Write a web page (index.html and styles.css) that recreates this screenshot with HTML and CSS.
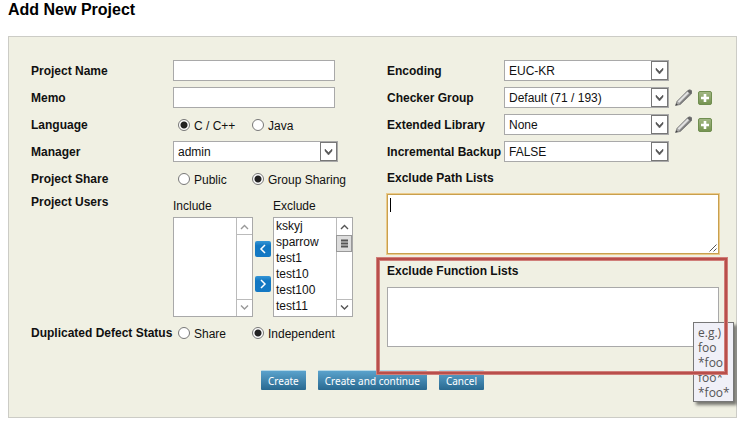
FILE: index.html
```
<!DOCTYPE html>
<html lang="en">
<head>
<meta charset="utf-8">
<title>Add New Project</title>
<link rel="stylesheet" href="styles.css">
</head>
<body>
<svg class="defs" aria-hidden="true">
  <defs>
    <linearGradient id="green" x1="0" y1="0" x2="0" y2="1"><stop offset="0" stop-color="#a3b886"/><stop offset="1" stop-color="#74924f"/></linearGradient>
    <linearGradient id="blue" x1="0" y1="0" x2="0" y2="1"><stop offset="0" stop-color="#3596d6"/><stop offset=".3" stop-color="#1277c2"/><stop offset="1" stop-color="#1479c4"/></linearGradient>
    <symbol id="drop" viewBox="0 0 17 19"><rect x=".5" y=".5" width="16" height="18" fill="#fff" stroke="#777"/><path d="M5 7v2l3.500 4 3.500-4V7l-3.500 3.500z" fill="#555" stroke="#555" stroke-width=".5"/></symbol>
    <symbol id="pencil" viewBox="0 0 16 16"><path d="M.5 15.500l1.500-4L12 1.500q2-1.500 3.500 0t-.5 3.500L5 14.500z" fill="#aaa" stroke="#777" stroke-width=".8"/><path d="M2.500 11.800l9.500-9.500 1.300 1.200L4 13z" fill="#e2e2e2"/><path d="M4.500 14l9.500-9.500" stroke="#777"/><path d="M11.500 2l3 3 1-1q.8-1.500-.3-2.500-1.500-1-2.700-.3z" fill="#666"/><path d="M.5 15.500l.8-2 1.400 1.400z" fill="#444"/></symbol>
    <symbol id="plus" viewBox="0 0 14 14"><rect x=".5" y=".5" width="13" height="13" rx="1.500" fill="url(#green)" stroke="#708e50"/><path d="M7 3v8M3 7h8" stroke="#fff" stroke-width="2.600"/></symbol>
  </defs>
</svg>
<main>
<h1>Add New Project</h1>
<form class="panel">
  <div class="columns">
    <div class="left">
      <div class="row"><label class="name" for="pname">Project Name</label><input class="text" id="pname" type="text"></div>
      <div class="row"><label class="name" for="memo">Memo</label><input class="text" id="memo" type="text"></div>
      <div class="row" role="radiogroup" aria-labelledby="lang"><span class="name" id="lang">Language</span>
        <label class="radio"><input type="radio" name="lang" checked><span>C / C++</span></label>
        <label class="radio"><input type="radio" name="lang"><span>Java</span></label></div>
      <div class="row"><label class="name" for="manager">Manager</label>
        <div class="combo"><select id="manager"><option>admin</option></select><svg class="drop"><use href="#drop"/></svg></div></div>
      <div class="row" role="radiogroup" aria-labelledby="share"><span class="name" id="share">Project Share</span>
        <label class="radio"><input type="radio" name="share"><span>Public</span></label>
        <label class="radio"><input type="radio" name="share" checked><span>Group Sharing</span></label></div>
      <div class="users">
        <span class="name">Project Users</span>
        <div class="pick">
          <label for="include">Include</label>
          <div class="listbox"><select id="include" multiple size="6"></select>
            <svg class="bar dim" viewBox="0 0 16 98"><path d="M.5 0v98M0 16.500h16M0 81.500h16" stroke="#bbb"/><path d="M5 11l3.500-3.500L12 11M5 87.500L8.500 91 12 87.500" fill="none" stroke="#999" stroke-width="1.400"/></svg></div>
        </div>
        <div class="moves">
          <button type="button" class="move" aria-label="Move to include"><svg viewBox="0 0 16 16"><rect width="16" height="16" rx="2" fill="url(#blue)"/><path d="M10 4L6 8l4 4" fill="none" stroke="#fff" stroke-width="1.500"/></svg></button>
          <button type="button" class="move" aria-label="Move to exclude"><svg viewBox="0 0 16 16"><rect width="16" height="16" rx="2" fill="url(#blue)"/><path d="M6 4l4 4-4 4" fill="none" stroke="#fff" stroke-width="1.500"/></svg></button>
        </div>
        <div class="pick">
          <label for="exclude">Exclude</label>
          <div class="listbox"><select id="exclude" multiple size="6"><option>kskyj</option><option>sparrow</option><option>test1</option><option>test10</option><option>test100</option><option>test11</option></select>
            <svg class="bar" viewBox="0 0 16 98"><path d="M.5 0v98M0 81.500h16" stroke="#bbb"/><rect x=".5" y="17.500" width="15" height="16" fill="#ddd" stroke="#999"/><path d="M5 22.500h7M5 25.500h7M5 28.500h7" stroke="#555" stroke-width="2"/><path d="M5 11l3.500-3.500L12 11M5 87.500L8.500 91 12 87.500" fill="none" stroke="#555" stroke-width="1.400"/></svg></div>
        </div>
      </div>
      <div class="row" role="radiogroup" aria-labelledby="dup"><span class="name" id="dup">Duplicated Defect Status</span>
        <label class="radio"><input type="radio" name="dup"><span>Share</span></label>
        <label class="radio"><input type="radio" name="dup" checked><span>Independent</span></label></div>
    </div>
    <div class="right">
      <div class="row"><label class="name" for="enc">Encoding</label>
        <div class="combo"><select id="enc"><option>EUC-KR</option></select><svg class="drop"><use href="#drop"/></svg></div></div>
      <div class="row"><label class="name" for="checker">Checker Group</label>
        <div class="combo"><select id="checker"><option>Default (71 / 193)</option></select><svg class="drop"><use href="#drop"/></svg></div>
        <button type="button" class="icon" aria-label="Edit checker group"><svg class="pencil"><use href="#pencil"/></svg></button><button type="button" class="icon" aria-label="Add checker group"><svg class="plus"><use href="#plus"/></svg></button></div>
      <div class="row"><label class="name" for="lib">Extended Library</label>
        <div class="combo"><select id="lib"><option>None</option></select><svg class="drop"><use href="#drop"/></svg></div>
        <button type="button" class="icon" aria-label="Edit library"><svg class="pencil"><use href="#pencil"/></svg></button><button type="button" class="icon" aria-label="Add library"><svg class="plus"><use href="#plus"/></svg></button></div>
      <div class="row"><label class="name" for="backup">Incremental Backup</label>
        <div class="combo"><select id="backup"><option>FALSE</option></select><svg class="drop"><use href="#drop"/></svg></div></div>
      <div class="area active">
        <label for="paths">Exclude Path Lists</label>
        <div class="field"><textarea id="paths"></textarea><span class="caret"></span>
          <svg class="grip" viewBox="0 0 8 8"><path d="M.5 7.500l7-7M4.500 7.500l3-3" stroke="#555"/></svg></div>
      </div>
      <div class="area">
        <label for="funcs">Exclude Function Lists</label>
        <div class="field"><textarea id="funcs"></textarea></div>
        <div class="tip" role="tooltip">e.g.)<br>foo<br>*foo<br>foo*<br>*foo*</div>
        <div class="frame"></div>
      </div>
    </div>
  </div>
  <div class="actions">
    <button type="button">Create</button><button type="button">Create and continue</button><button type="button">Cancel</button>
  </div>
</form>
</main>
</body>
</html>
```
FILE: styles.css
```
* { box-sizing: border-box; }
body {
  margin: 0;
  background: #fff;
  color: #111;
  font: 12px/16px "Liberation Sans", Arial, sans-serif;
}
.defs { position: absolute; width: 0; height: 0; }
main { padding: 0 0 0 8px; }
h1 { margin: 0 0 16px; font-size: 16px; line-height: 20px; color: #000; }
.panel {
  border: 1px solid #ccccc6;
  background: #f0f0e3;
  padding: 20px 17px 27px 22px;
}
.columns { display: flex; }
.left { flex: 0 0 356px; }
.right { flex: 1; min-width: 0; }
.row { display: flex; align-items: center; height: 27px; }
.name { flex: none; width: 142px; font-weight: bold; white-space: nowrap; }
.right .name { width: 117px; }
input, select, textarea, button { margin: 0; font: inherit; color: inherit; }
.text {
  width: 162px;
  height: 21px;
  padding: 0 5px;
  border: 1px solid #a9a9a9;
  background: #fff;
}
.combo { position: relative; width: 165px; height: 21px; }
.combo select {
  appearance: none;
  display: block;
  width: 100%;
  height: 100%;
  padding: 0 20px 0 4px;
  border: 1px solid #a9a9a9;
  border-radius: 0;
  background: #fff;
}
.drop {
  position: absolute;
  top: 1px;
  right: 1px;
  width: 17px;
  height: 19px;
  pointer-events: none;
}
.radio {
  display: flex;
  align-items: center;
  gap: 4px;
  min-width: 74px;
  padding-left: 5px;
  white-space: nowrap;
}
.radio input {
  appearance: none;
  width: 12px;
  height: 12px;
  border: 1px solid #777;
  border-radius: 50%;
  background: #fff;
}
.radio input:checked { background: radial-gradient(circle, #222 3px, #fff 4px); }
.radio span { padding-top: 3px; }
.users { display: flex; height: 127px; padding-top: 2px; }
.pick { width: 80px; padding-top: 4px; }
.pick label { display: block; height: 19px; }
.listbox {
  display: flex;
  height: 100px;
  border: 1px solid #a9a9a9;
  background: #fff;
}
.listbox select {
  flex: 1;
  min-width: 0;
  height: 98px;
  padding: 1px 0 0;
  border: 0;
  border-radius: 0;
  background: transparent;
  overflow: hidden;
  scrollbar-width: none;
}
.listbox option { min-height: 16px; padding: 0 2px; line-height: 16px; }
.bar { flex: none; width: 16px; height: 98px; }
.moves {
  display: flex;
  flex-direction: column;
  align-items: center;
  gap: 19px;
  width: 20px;
  padding-top: 47px;
}
.move, .icon { display: block; padding: 0; border: 0; background: none; }
.move svg { display: block; width: 16px; height: 16px; }
.icon { margin-left: 6px; }
.icon svg { display: block; }
.pencil { width: 17px; height: 17px; }
.plus { width: 14px; height: 14px; }
.area { position: relative; }
.area label { display: block; padding: 5px 0 8px; font-weight: bold; }
.field { position: relative; }
.field textarea {
  display: block;
  width: 100%;
  height: 60px;
  padding: 2px;
  border: 1px solid #a9a9a9;
  background: #fff;
  resize: none;
}
.active { padding-bottom: 4px; }
.active textarea {
  border-color: #c8a04e;
  box-shadow: 0 0 0 1px #eccb8b;
}
.caret {
  position: absolute;
  top: 4px;
  left: 3px;
  width: 1px;
  height: 14px;
  background: #000;
}
.grip { position: absolute; right: 2px; bottom: 2px; width: 8px; height: 8px; }
.frame {
  position: absolute;
  top: 0;
  right: -8px;
  bottom: -27px;
  left: -10px;
  border: 2px solid #b94f4b;
  box-shadow: 0 0 0 1px #d07f7a, inset 0 0 0 1px #d07f7a;
  pointer-events: none;
}
.tip {
  position: absolute;
  top: 64px;
  right: -15px;
  width: 41px;
  padding: 2px 4px 1px;
  border: 1px solid #777;
  background: #f0f0f7;
  box-shadow: 3px 3px 3px rgba(0, 0, 0, .5);
  color: #555;
  font: 12px/15px "Open Sans", sans-serif;
  white-space: nowrap;
}
.actions {
  display: flex;
  gap: 12px;
  padding: 23px 0 0 230px;
}
.actions button {
  height: 20px;
  padding: 0 7px;
  border: 0;
  border-top: 1px solid #b5d8e6;
  border-radius: 1px;
  background: linear-gradient(#5aa2cc, #296990);
  color: #fff;
  font: 10px/18px "Noto Sans", sans-serif;
  white-space: nowrap;
}
```
